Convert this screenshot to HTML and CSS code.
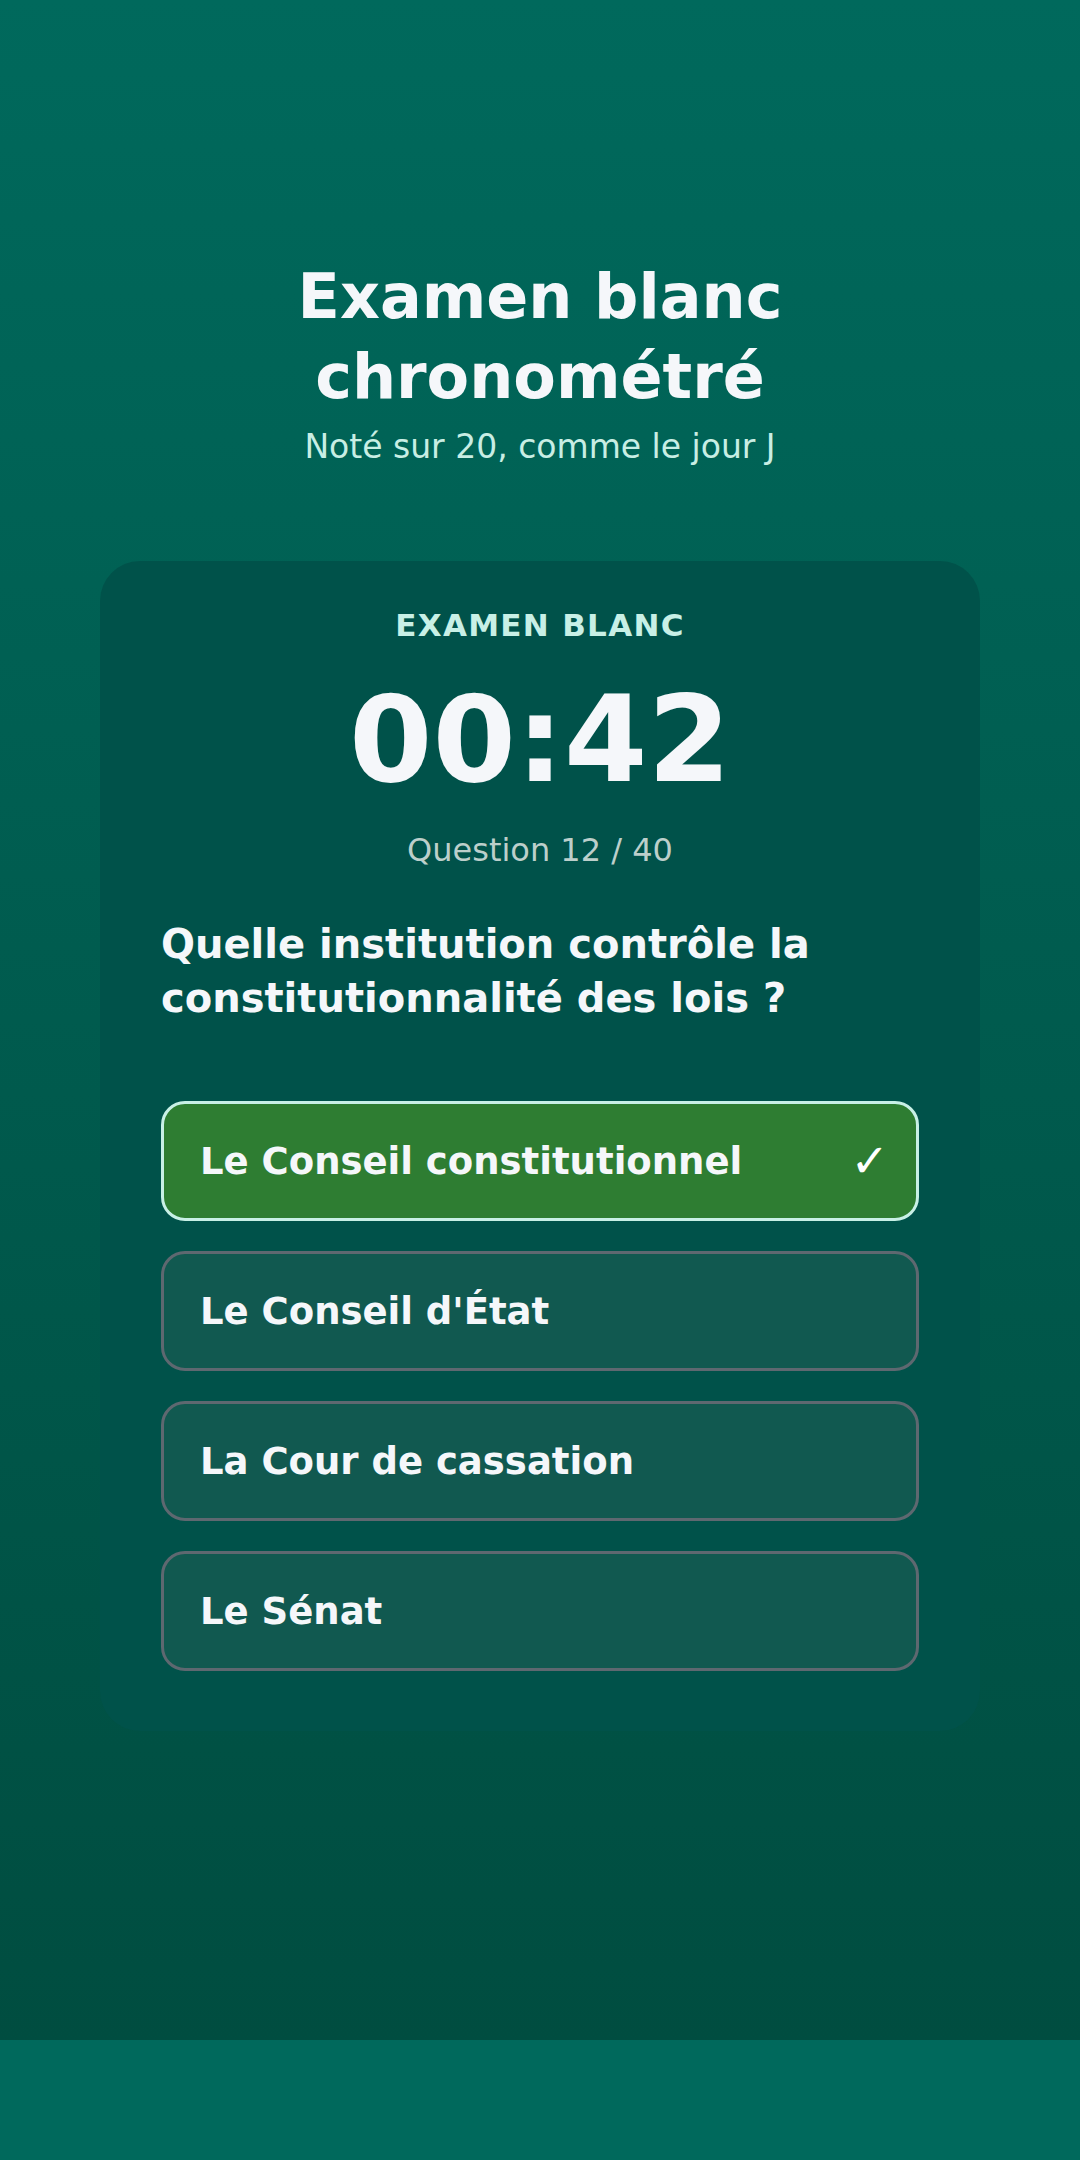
FILE: index.html
```html
<!DOCTYPE html>
<html lang="fr">
<head>
<meta charset="utf-8">
<title>Examen blanc chronométré</title>
<link rel="stylesheet" href="styles.css">
</head>
<body>
<main class="screen">
  <header class="hero">
    <h1 class="hero-title">Examen blanc<br>chronométré</h1>
    <p class="hero-sub">Noté sur 20, comme le jour J</p>
  </header>
  <section class="card">
    <div class="card-label">EXAMEN BLANC</div>
    <div class="timer">00:42</div>
    <div class="counter">Question 12 / 40</div>
    <h2 class="question">Quelle institution contrôle la constitutionnalité des lois ?</h2>
    <div class="options">
      <div class="option option-selected"><span class="option-text">Le Conseil constitutionnel</span><span class="option-check">✓</span></div>
      <div class="option"><span class="option-text">Le Conseil d'État</span></div>
      <div class="option"><span class="option-text">La Cour de cassation</span></div>
      <div class="option"><span class="option-text">Le Sénat</span></div>
    </div>
  </section>
</main>
</body>
</html>
```

FILE: styles.css
```css
html, body {
  margin: 0;
  padding: 0;
}
body {
  background: #00695c;
  font-family: "DejaVu Sans", "Noto Sans", sans-serif;
  color: #f5f7fa;
}
.screen {
  box-sizing: border-box;
  height: 2040px;
  padding: 257px 100px 0;
  background: linear-gradient(180deg, #00695c 0%, #004d40 100%);
  display: flex;
  flex-direction: column;
  align-items: stretch;
}
.hero {
  text-align: center;
}
.hero-title {
  margin: 0;
  font-size: 62px;
  line-height: 80px;
  font-weight: 700;
  color: #f5f7fa;
}
.hero-sub {
  margin: 10px 0 0;
  font-size: 33px;
  line-height: 40px;
  color: #c8eee4;
}
.card {
  margin-top: 94px;
  background: #00524a;
  border-radius: 40px;
  padding: 46px 61px 60px;
  display: flex;
  flex-direction: column;
}
.card-label {
  text-align: center;
  font-size: 31px;
  line-height: 36px;
  font-weight: 700;
  letter-spacing: 1.3px;
  color: #c8f0e6;
}
.timer {
  margin-top: 27px;
  text-align: center;
  font-size: 120px;
  line-height: 140px;
  font-weight: 700;
  color: #f5f7fa;
}
.counter {
  margin-top: 22px;
  text-align: center;
  font-size: 32px;
  line-height: 36px;
  color: #bccfcb;
}
.question {
  margin: 49px 0 0;
  font-size: 40px;
  line-height: 54px;
  font-weight: 700;
  color: #f5f7fa;
}
.options {
  margin-top: 76px;
  display: flex;
  flex-direction: column;
  gap: 30px;
}
.option {
  box-sizing: border-box;
  height: 120px;
  border: 3px solid #5e6870;
  border-radius: 24px;
  background: #115950;
  padding: 0 27px 0 36px;
  display: flex;
  align-items: center;
  font-size: 37px;
  font-weight: 700;
  color: #f5f7fa;
}
.option-selected {
  background: #2e7d32;
  border-color: #c8f0e6;
}
.option-text {
  flex: 1;
}
.option-check {
  font-size: 46px;
  font-weight: 400;
  line-height: 1;
  color: #ffffff;
}
```
